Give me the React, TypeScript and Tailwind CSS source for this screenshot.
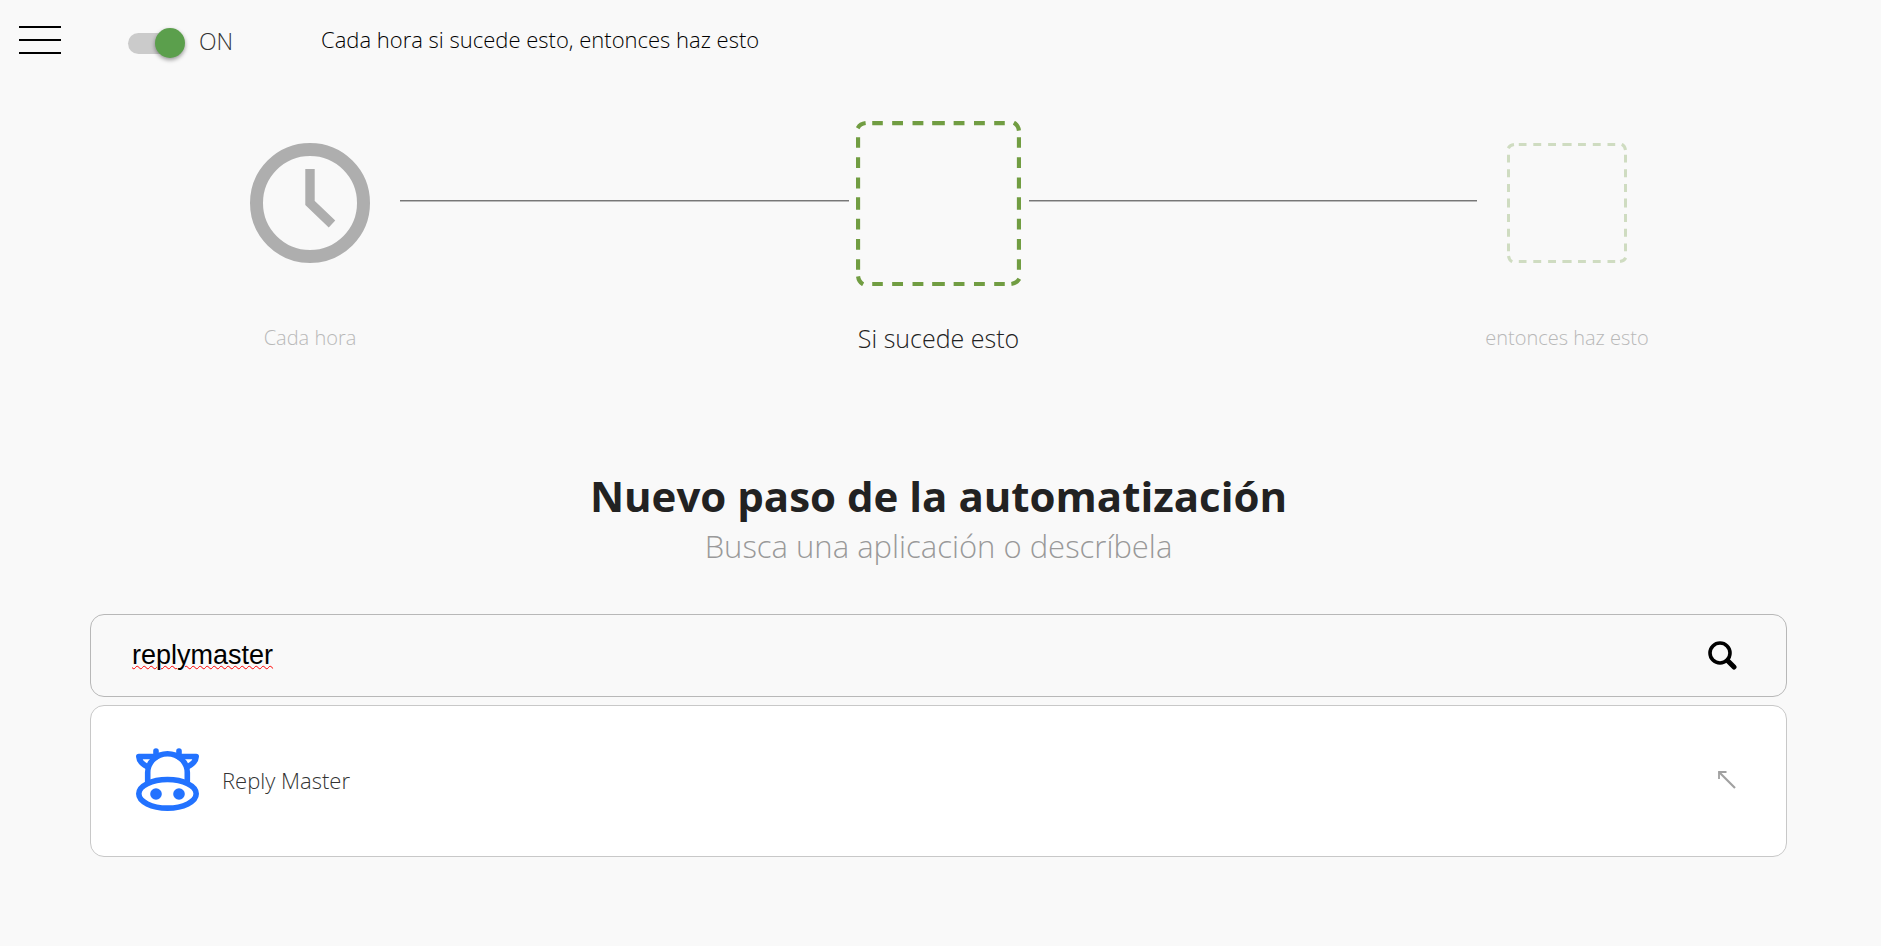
import { useState } from "react";

const steps = [
  { id: "hour", label: "Cada hora", kind: "clock", active: false },
  { id: "if", label: "Si sucede esto", kind: "empty", active: true },
  { id: "then", label: "entonces haz esto", kind: "empty", active: false },
];

const apps = [{ id: "reply-master", name: "Reply Master" }];

function ClockIcon() {
  return (
    <svg viewBox="0 0 120 120" className="size-[120px]" fill="none" stroke="#aeaeae" aria-hidden="true">
      <circle cx="60" cy="60" r="53.5" strokeWidth="13" />
      <path d="M60 26v34l22 21" strokeWidth="9.4" />
    </svg>
  );
}

function DashedBox({ className }: { className: string }) {
  // one side with its left corner, repeated for the four sides
  const side =
    "M1.2 5.2Q3 2 7 1.5M11.8 1.5h7.7M26.3 1.5h7.9M41.1 1.5H49M55.4 1.5h9.2M71 1.5h7.9M85.8 1.5h7.9M100.5 1.5h7.7";
  return (
    <svg viewBox="0 0 120 120" className={className} fill="none" stroke="#719d42" strokeWidth="3" aria-hidden="true">
      {[0, 90, 180, 270].map((angle) => (
        <path key={angle} d={side} transform={`rotate(${angle} 60 60)`} />
      ))}
    </svg>
  );
}

function CowLogo() {
  return (
    <svg viewBox="0 0 63 63" className="size-[63px]" fill="none" stroke="#2272ff" strokeWidth="5.6" strokeLinecap="round" strokeLinejoin="round" aria-hidden="true">
      <ellipse cx="31.5" cy="45.8" rx="28.7" ry="14.3" />
      <path d="M11.7 34V24.5a19.8 18.8 0 0 1 39.6 0V34" />
      <path d="M20 3v6M43 3v6" />
      <path d="M17 8.5H2.8Q3.2 14.5 11 18.5M46 8.5H60.2Q59.8 14.5 52 18.5" />
      <circle cx="20" cy="46" r="5.8" fill="#2272ff" stroke="none" />
      <circle cx="43" cy="46" r="5.8" fill="#2272ff" stroke="none" />
    </svg>
  );
}

function SearchIcon() {
  return (
    <svg viewBox="0 0 29 29" className="size-[29px]" fill="none" stroke="#000" aria-hidden="true">
      <circle cx="12" cy="12" r="10" strokeWidth="3.6" />
      <path d="M19.5 19.5L26 26" strokeWidth="5" strokeLinecap="round" />
    </svg>
  );
}

function Connector() {
  return <div className="mt-20 h-0.5 flex-1 border-t border-b border-t-[#777] border-b-[#bbb]" />;
}

export default function App() {
  const [on, setOn] = useState(true);
  const [query, setQuery] = useState("replymaster");

  return (
    <div className="min-h-screen bg-[#f9f9f9] font-['Open_Sans','Noto_Sans',sans-serif] font-light text-[#222]">
      <header className="flex h-20 items-start pl-[19px]">
        <button type="button" aria-label="Menú" className="mt-[26px] flex w-[42px] flex-col gap-[11px]">
          <span className="h-0.5 w-full bg-black" />
          <span className="h-0.5 w-full bg-black" />
          <span className="h-0.5 w-full bg-black" />
        </button>
        <label className="mt-7 ml-[67px] flex h-[30px] w-[193px] cursor-pointer items-start gap-[14px]">
          <input type="checkbox" className="peer sr-only" checked={on} onChange={() => setOn(!on)} />
          <span className="relative flex h-[30px] w-[57px] items-center">
            <span className="h-[21px] w-[54px] rounded-full bg-[#cbcbcb]" />
            <span
              className={`absolute size-[30px] rounded-full shadow-[0_2px_4px_rgba(0,0,0,0.4)] ${
                on ? "right-0 bg-[#5b9f4c]" : "left-0 bg-white"
              }`}
            />
          </span>
          <span className="text-[23px] leading-[26px] text-[#333]">{on ? "ON" : "OFF"}</span>
        </label>
        <p className="mt-6 text-[22px] leading-[30px] text-black">Cada hora si sucede esto, entonces haz esto</p>
      </header>

      <main className="pr-[94px] pl-[90px]">
        <ol className="flex items-start px-[130px] pt-10">
          {steps.map((step, i) => (
            <li key={step.id} className={i < steps.length - 1 ? "flex flex-1" : "flex"}>
              <div className="flex w-[180px] flex-col items-center">
                <div className="flex h-[166px] items-center">
                  {step.kind === "clock" ? (
                    <ClockIcon />
                  ) : (
                    <DashedBox className={step.active ? "size-[165px]" : "size-[120px] opacity-30"} />
                  )}
                </div>
                <span
                  className={`mt-[34px] leading-9 whitespace-nowrap ${
                    step.active ? "text-[25px] text-[#222]" : "text-[20px] text-[#b8b8b8]"
                  }`}
                >
                  {step.label}
                </span>
              </div>
              {i < steps.length - 1 && <Connector />}
            </li>
          ))}
        </ol>

        <section className="pt-[114px] text-center">
          <h1 className="text-[42px] leading-[52px] font-bold">Nuevo paso de la automatización</h1>
          <p className="text-[31px] leading-[48px] text-[#999]">Busca una aplicación o descríbela</p>
        </section>

        <form
          className="mt-11 flex h-[83px] items-center rounded-[14px] border border-[#b8b8b8] pr-[49px] pl-[41px]"
          onSubmit={(e) => e.preventDefault()}
        >
          <input
            type="text"
            aria-label="Busca una aplicación"
            className="min-w-0 flex-1 bg-transparent font-['Liberation_Sans',Arial,sans-serif] text-[27px] font-normal text-black underline decoration-[#f00] decoration-wavy decoration-1 outline-none"
            value={query}
            onChange={(e) => setQuery(e.target.value)}
          />
          <button type="submit" aria-label="Buscar">
            <SearchIcon />
          </button>
        </form>

        <ul className="mt-2 rounded-[14px] border border-[#c8c8c8] bg-white">
          {apps.map((app) => (
            <li key={app.id}>
              <button type="button" className="flex h-[150px] w-full items-center pr-[50px] pb-[3px] pl-[45px] text-left">
                <CowLogo />
                <span className="ml-[23px] flex-1 text-[22px] leading-8 text-[#333]">{app.name}</span>
                <svg viewBox="0 0 18 18" className="size-[18px]" fill="none" stroke="#a0a0a0" aria-hidden="true">
                  <path d="M17 17L1 1" strokeWidth="2.2" />
                  <path d="M1 8V1h7.5" strokeWidth="1.8" />
                </svg>
              </button>
            </li>
          ))}
        </ul>
      </main>
    </div>
  );
}
